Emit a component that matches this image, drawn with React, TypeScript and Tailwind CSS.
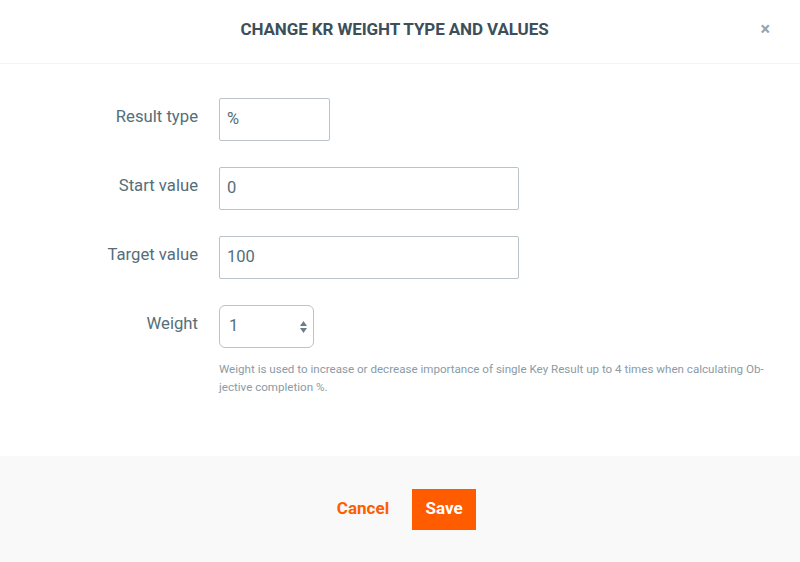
const rows = [
  { label: "Result type", value: "%", width: "w-[111px]" },
  { label: "Start value", value: "0", width: "w-[300px]" },
  { label: "Target value", value: "100", width: "w-[300px]" },
];

export default function App() {
  return (
    <div className="w-[800px] h-[562px] bg-white flex flex-col font-['Roboto',sans-serif] text-[#546e7a]">
      <div className="relative h-[64px] shrink-0 border-b border-[#f2f4f5] flex items-center justify-center pr-[11px]">
        <h1 className="text-[17px] font-bold text-[#3c4f5b] tracking-[-0.1px] pb-[4px]">
          CHANGE KR WEIGHT TYPE AND VALUES
        </h1>
        <button className="absolute right-[30px] top-[20px] text-[#9aa4aa] text-[18px] font-bold leading-none">
          ×
        </button>
      </div>

      <div className="flex-1 pt-[34px] flex flex-col">
        {rows.map((r) => (
          <div key={r.label} className="flex items-start h-[69px]">
            <label className="w-[198px] text-right text-[16.7px] pt-[9px] leading-[20px]">{r.label}</label>
            <div
              className={`${r.width} ml-[21px] h-[43px] border border-[#b9c3c8] rounded-[2px] flex items-center pl-[7px] text-[16.5px] text-[#546e7a]`}
            >
              {r.value}
            </div>
          </div>
        ))}
        <div className="flex items-start">
          <label className="w-[198px] text-right text-[16.7px] pt-[9px] leading-[20px]">Weight</label>
          <div className="ml-[21px] flex flex-col">
            <div className="w-[95px] h-[43px] border border-[#b9c3c8] rounded-[6px] flex items-center justify-between pl-[9px] pr-[5px] text-[16.5px]">
              <span>1</span>
              <svg width="9" height="14" viewBox="0 0 9 14">
                <path d="M4.5 1 L8 6 L1 6 Z" fill="#6b7f8a" />
                <path d="M4.5 13 L8 8 L1 8 Z" fill="#6b7f8a" />
              </svg>
            </div>
            <p className="mt-[12px] w-[570px] text-[11.6px] leading-[18px] text-[#8b9ba5]">
              Weight is used to increase or decrease importance of single Key Result up to 4 times when calculating Ob-
              <br />
              jective completion %.
            </p>
          </div>
        </div>
      </div>

      <div className="h-[106px] shrink-0 bg-[#f9f9f9] flex items-center justify-center gap-[23px] pl-[13px]">
        <button className="text-[17px] font-bold text-[#ff5e00]">Cancel</button>
        <button className="h-[41px] w-[64px] bg-[#ff5c00] text-white text-[17px] font-bold">Save</button>
      </div>
    </div>
  );
}
